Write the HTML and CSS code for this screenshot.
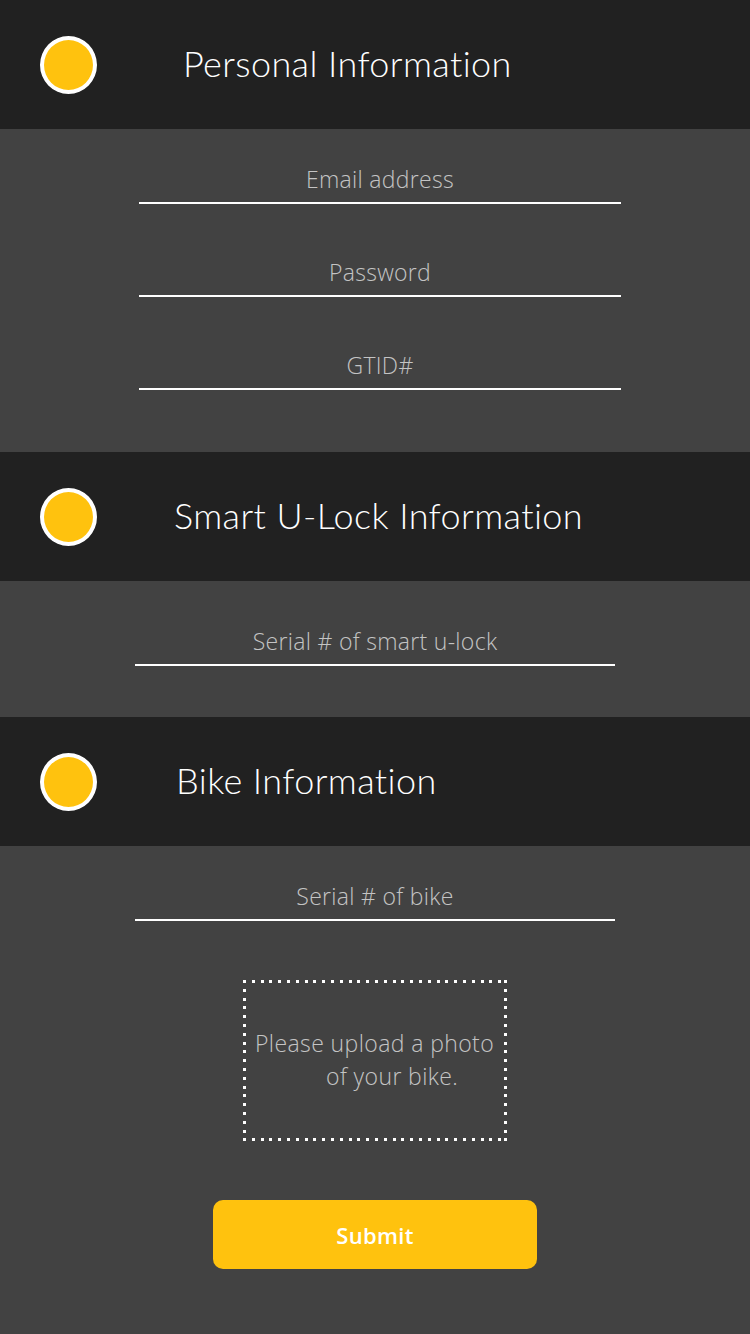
FILE: index.html
```html
<!DOCTYPE html>
<html lang="en">
<head>
<meta charset="utf-8">
<title>Registration</title>
<link rel="stylesheet" href="styles.css">
</head>
<body>
<main class="page">
  <section class="sec">
    <header class="sec-head">
      <span class="dot"></span>
      <h2 class="sec-title title-personal">Personal Information</h2>
    </header>
    <div class="sec-body body-personal">
      <div class="field field-wide"><span class="field-label">Email address</span></div>
      <div class="field field-wide"><span class="field-label">Password</span></div>
      <div class="field field-wide"><span class="field-label">GTID#</span></div>
    </div>
  </section>
  <section class="sec">
    <header class="sec-head">
      <span class="dot"></span>
      <h2 class="sec-title title-lock">Smart U-Lock Information</h2>
    </header>
    <div class="sec-body body-lock">
      <div class="field"><span class="field-label">Serial # of smart u-lock</span></div>
    </div>
  </section>
  <section class="sec">
    <header class="sec-head">
      <span class="dot"></span>
      <h2 class="sec-title title-bike">Bike Information</h2>
    </header>
    <div class="sec-body body-bike">
      <div class="field"><span class="field-label">Serial # of bike</span></div>
      <div class="upload">
        <span class="upload-line">Please upload a photo</span>
        <span class="upload-line upload-line-2">of your bike.</span>
      </div>
      <button class="submit" type="button">Submit</button>
    </div>
  </section>
</main>
</body>
</html>
```
FILE: styles.css
```css
* { box-sizing: border-box; }
html, body { margin: 0; padding: 0; }
body {
  width: 750px;
  height: 1334px;
  background: #424242;
  font-family: "Lato", "Open Sans", sans-serif;
  overflow: hidden;
}
.page { display: flex; flex-direction: column; }
.sec-head {
  height: 129px;
  background: #212121;
  display: flex;
  align-items: center;
}
.dot {
  width: 57px;
  height: 58px;
  margin-left: 40px;
  border-radius: 50%;
  border: 4px solid #ffffff;
  background: #ffc20e;
  flex: none;
}
.sec-title {
  margin: 0 0 3px 0;
  color: #ffffff;
  font-weight: 300;
  font-size: 36px;
  line-height: 40px;
  letter-spacing: 0.4px;
}
.title-personal { margin-left: 86px; }
.title-lock { margin-left: 77px; }
.title-bike { margin-left: 79px; }

.sec-body {
  background: #424242;
  display: flex;
  flex-direction: column;
}
.body-personal { padding: 35px 0 0 139px; gap: 53px; height: 323px; }
.body-lock { padding: 45px 0 0 135px; height: 136px; }
.body-bike { padding: 35px 0 0 0; align-items: center; height: 488px; }

.field {
  width: 480px;
  border-bottom: 2px solid #ffffff;
  padding-bottom: 8px;
  text-align: center;
}
.field-wide { width: 482px; }
.field-label {
  display: block;
  line-height: 30px;
  font-family: "Open Sans", "Lato", sans-serif;
  font-size: 23px;
  font-weight: 300;
  letter-spacing: 0.3px;
  color: #c4c4c4;
}

.upload {
  margin-top: 59px;
  width: 264px;
  height: 161px;
  display: flex;
  flex-direction: column;
  justify-content: center;
  padding: 0 0 2px 12px;
  color: #c4c4c4;
  font-family: "Open Sans", "Lato", sans-serif;
  font-weight: 300;
  font-size: 23px;
  letter-spacing: 0.4px;
  line-height: 33px;
  background-image:
    repeating-linear-gradient(to right, #fff 0 3px, transparent 3px 8.8px),
    repeating-linear-gradient(to right, #fff 0 3px, transparent 3px 8.8px),
    repeating-linear-gradient(to bottom, #fff 0 3px, transparent 3px 8.8px),
    repeating-linear-gradient(to bottom, #fff 0 3px, transparent 3px 8.8px);
  background-size: 100% 3px, 100% 3px, 3px 100%, 3px 100%;
  background-position: 0 0, 0 100%, 0 0, 100% 0;
  background-repeat: no-repeat;
}
.upload-line { display: block; white-space: nowrap; }
.upload-line-2 { padding-left: 71px; }

.submit {
  margin-top: 59px;
  width: 324px;
  height: 69px;
  border: none;
  border-radius: 10px;
  background: #ffc20e;
  color: #ffffff;
  font-family: "Open Sans", "Lato", sans-serif;
  font-size: 22px;
  font-weight: 600;
  letter-spacing: 0.3px;
  padding: 0;
}
```
